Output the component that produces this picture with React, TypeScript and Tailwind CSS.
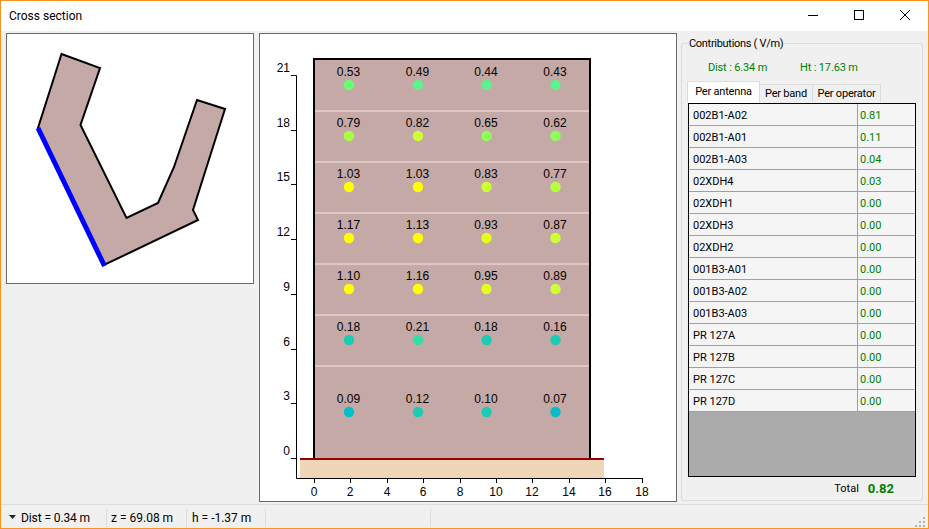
const ys = [21, 18, 15, 12, 9, 6, 3, 0];
const xs = [0, 2, 4, 6, 8, 10, 12, 14, 16, 18];
const dotX = [349, 418, 486.5, 555.5];
const floors = [
  { y: 85, v: ["0.53", "0.49", "0.44", "0.43"], c: ["#66ff73", "#5cf28c", "#5cf28c", "#5cf28c"] },
  { y: 136, v: ["0.79", "0.82", "0.65", "0.62"], c: ["#a6ff40", "#ccff33", "#8cff59", "#8cff59"] },
  { y: 187, v: ["1.03", "1.03", "0.83", "0.77"], c: ["#ffff00", "#ffff00", "#ccff33", "#b3ff40"] },
  { y: 238, v: ["1.17", "1.13", "0.93", "0.87"], c: ["#ffff00", "#ffff00", "#e6ff19", "#ccff33"] },
  { y: 289, v: ["1.10", "1.16", "0.95", "0.89"], c: ["#ffff00", "#ffff00", "#e6ff19", "#ccff33"] },
  { y: 340, v: ["0.18", "0.21", "0.18", "0.16"], c: ["#19ccb3", "#33dfa6", "#19ccb3", "#19ccb3"] },
  { y: 412, v: ["0.09", "0.12", "0.10", "0.07"], c: ["#00bfc8", "#19ccb3", "#19ccb3", "#00bfc8"] },
];
const rows: [string, string][] = [
  ["002B1-A02", "0.81"], ["002B1-A01", "0.11"], ["002B1-A03", "0.04"], ["02XDH4", "0.03"],
  ["02XDH1", "0.00"], ["02XDH3", "0.00"], ["02XDH2", "0.00"], ["001B3-A01", "0.00"],
  ["001B3-A02", "0.00"], ["001B3-A03", "0.00"], ["PR 127A", "0.00"], ["PR 127B", "0.00"],
  ["PR 127C", "0.00"], ["PR 127D", "0.00"],
];

function Plan() {
  const pts = "54.5,20 93,34 73.5,91 119.5,184 151,169 167,133 190,66 218,75 186,176 191,186 97,231 31,94";
  return (
    <svg viewBox="0 0 246 249" width="246" height="249" className="block">
      <polygon points={pts} fill="#c5a9a6" stroke="#000" strokeWidth="2" strokeLinejoin="miter" />
      <line x1="31" y1="94" x2="97.5" y2="232" stroke="#0000ff" strokeWidth="5" />
    </svg>
  );
}

function Chart() {
  return (
    <svg viewBox="0 0 416 467" width="416" height="467" className="block">
      <g transform="translate(-260 -34)" fontFamily="'Liberation Sans', Arial, sans-serif" fontSize="12" fill="#000">
        <rect x="314" y="59" width="276" height="400" fill="#c5a9a6" />
        {[111, 162, 213, 264, 315, 366].map((y) => (
          <line key={y} x1="315" x2="589" y1={y} y2={y} stroke="#dcc8c5" strokeWidth="2" />
        ))}
        <polyline points="314,459 314,59 590,59 590,459" fill="none" stroke="#000" strokeWidth="2" />
        <rect x="300" y="459" width="304" height="19" fill="#f0d6b9" />
        <line x1="300" x2="604" y1="459" y2="459" stroke="#990000" strokeWidth="2" />
        <polyline points="291,75.5 296.5,75.5 296.5,478.5 642.5,478.5" fill="none" stroke="#000" />
        {ys.map((v, i) => {
          const y = Math.round(75 + (i * 383) / 7);
          return (
            <g key={v}>
              <line x1="291" x2="296" y1={y + 0.5} y2={y + 0.5} stroke="#000" />
              <text x="290" y={y - 3} textAnchor="end">{v}</text>
            </g>
          );
        })}
        {xs.map((v, i) => {
          const x = Math.round(314 + i * 36.4);
          return (
            <g key={v}>
              <line x1={x + 0.5} x2={x + 0.5} y1="478" y2="483" stroke="#000" />
              <text x={x} y="495.5" textAnchor="middle">{v}</text>
            </g>
          );
        })}
        {floors.map((f) =>
          f.v.map((t, i) => (
            <g key={t + i + f.y}>
              <text x={dotX[i] - 0.5} y={f.y - 9} textAnchor="middle">{t}</text>
              <circle cx={dotX[i]} cy={f.y} r="5.2" fill={f.c[i]} />
            </g>
          )),
        )}
      </g>
    </svg>
  );
}

export default function App() {
  return (
    <div className="flex h-[529px] w-[929px] flex-col overflow-hidden border border-[#f7931e] bg-[#f0f0f0] text-[11px] text-black [font-family:'Roboto',sans-serif]">
      <div className="flex h-[30px] shrink-0 items-center justify-between bg-white pl-2">
        <span className="text-[12px]">Cross section</span>
        <div className="flex h-full items-center pb-[2px]">
          <div className="flex h-full w-[46px] items-center justify-center">
            <div className="h-px w-[10px] bg-black" />
          </div>
          <div className="flex h-full w-[46px] items-center justify-center">
            <div className="h-[10px] w-[10px] border border-black" />
          </div>
          <div className="flex h-full w-[46px] items-center justify-center">
            <svg width="10" height="10" viewBox="0 0 10 10">
              <path d="M0 0 L10 10 M10 0 L0 10" stroke="#000" strokeWidth="1" />
            </svg>
          </div>
        </div>
      </div>

      <div className="flex min-h-0 flex-1 items-start pl-[5px] pt-[2px]">
        <div className="h-[251px] w-[248px] shrink-0 border border-[#696969] bg-white">
          <Plan />
        </div>
        <div className="ml-[5px] h-[469px] w-[418px] shrink-0 border border-[#696969] bg-white">
          <Chart />
        </div>
        <div className="relative ml-[4px] mt-[10px] flex h-[458px] w-[242px] shrink-0 flex-col rounded-[2px] border border-[#dcdcdc] pl-[6px]">
          <span className="absolute -top-[8px] left-[6px] bg-[#f0f0f0] px-[1px] leading-[16px] tracking-[-0.3px]">Contributions ( V/m)</span>
          <div className="flex h-[37px] shrink-0 items-end pb-[5px] pl-[20px] tracking-[-0.15px] text-[#008000]">
            <span className="w-[92px]">Dist : 6.34 m</span>
            <span>Ht : 17.63 m</span>
          </div>
          <div className="-ml-px flex h-[22px] shrink-0 items-end tracking-[-0.2px]">
            <div className="flex h-[22px] w-[73px] items-center justify-center border border-b-0 border-[#dcdcdc] bg-white">Per antenna</div>
            <div className="flex h-[19px] w-[53px] items-center justify-center border border-b-0 border-l-0 border-[#dcdcdc]">Per band</div>
            <div className="flex h-[19px] w-[68px] items-center justify-center border border-b-0 border-l-0 border-[#dcdcdc]">Per operator</div>
          </div>
          <div className="flex h-[374px] w-[228px] shrink-0 flex-col border border-black bg-[#ababab]">
            {rows.map(([n, v]) => (
              <div key={n} className="flex h-[22px] shrink-0 border-b border-[#a0a0a0] bg-[#f5f5f5] pt-px leading-[21px]">
                <div className="-mt-px w-[169px] border-r border-[#a0a0a0] pl-[4px] pt-px">{n}</div>
                <div className="flex-1 pl-[2px] text-[#008000]">{v}</div>
              </div>
            ))}
          </div>
          <div className="mt-[2px] flex items-center justify-end pr-[28px]">
            <span>Total</span>
            <span className="ml-[9px] text-[13px] font-bold text-[#008000]">0.82</span>
          </div>
        </div>
      </div>

      <div className="relative flex h-[24px] shrink-0 items-center border-t border-[#dcdcdc] bg-[#f0f0f0] pt-[2px] text-[12px]">
        <svg width="8" height="5" viewBox="0 0 8 5" className="ml-[8px]">
          <path d="M0 0 H7 L3.5 4 Z" fill="#222" />
        </svg>
        <span className="ml-[4px] w-[85px] tracking-[-0.1px]">Dist = 0.34 m</span>
        <span className="h-[18px] w-px bg-[#dcdcdc]" />
        <span className="ml-[4px] w-[75px]">z = 69.08 m</span>
        <span className="h-[18px] w-px bg-[#dcdcdc]" />
        <span className="ml-[5px] w-[73px]">h = -1.37 m</span>
        <span className="h-[18px] w-px bg-[#dcdcdc]" />
        <span className="ml-[164px] h-[18px] w-px bg-[#dcdcdc]" />
        <svg width="11" height="11" viewBox="0 0 11 11" className="absolute bottom-[1px] right-[2px]">
          <path d="M8 1h2v2H8z M4 5h2v2H4z M8 5h2v2H8z M0 9h2v2H0z M4 9h2v2H4z M8 9h2v2H8z" fill="#b5b5b5" />
        </svg>
      </div>
    </div>
  );
}
